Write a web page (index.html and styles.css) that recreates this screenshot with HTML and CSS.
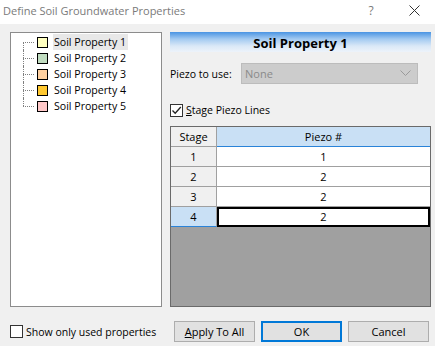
FILE: index.html
```html
<!DOCTYPE html>
<html lang="en">
<head>
    <meta charset="UTF-8">
    <title>Define Soil Groundwater Properties</title>
    <link rel="stylesheet" href="styles.css">
</head>
<body>
    <div class="dialog">
        <!-- Window title bar -->
        <div class="titlebar">
            <span class="title">Define Soil Groundwater Properties</span>
            <span class="help">?</span>
            <span class="close">
                <svg width="11" height="11" viewBox="0 0 11 11"><path d="M0.5 0.5 L10.5 10.5 M10.5 0.5 L0.5 10.5" stroke="#333" stroke-width="1"/></svg>
            </span>
        </div>

        <div class="main">
            <!-- Property tree -->
            <ul class="tree">
                <li class="first"><span class="twig"></span><span class="swatch c1"></span><span class="label selected">Soil Property 1</span></li>
                <li><span class="twig"></span><span class="swatch c2"></span><span class="label">Soil Property 2</span></li>
                <li><span class="twig"></span><span class="swatch c3"></span><span class="label">Soil Property 3</span></li>
                <li><span class="twig"></span><span class="swatch c4"></span><span class="label">Soil Property 4</span></li>
                <li class="last"><span class="twig"></span><span class="swatch c5"></span><span class="label">Soil Property 5</span></li>
            </ul>

            <!-- Right side panel -->
            <div class="panel">
                <div class="panelHead">Soil Property 1</div>

                <div class="field">
                    <span class="fieldLabel">Piezo to use:</span>
                    <div class="select">
                        <span>None</span>
                        <svg width="11" height="7" viewBox="0 0 11 7"><path d="M0.5 0.5 L5.5 5.5 L10.5 0.5" fill="none" stroke="#9a9a9a" stroke-width="1"/></svg>
                    </div>
                </div>

                <div class="check">
                    <span class="box">
                        <svg width="11" height="11" viewBox="0 0 11 11"><path d="M1.5 5.5 L4.2 8.3 L9.8 2" fill="none" stroke="#222" stroke-width="1.3"/></svg>
                    </span>
                    <span><u>S</u>tage Piezo Lines</span>
                </div>

                <!-- Stage / piezo grid -->
                <div class="grid">
                    <div class="row head">
                        <div class="cell stage">Stage</div>
                        <div class="cell piezo current">Piezo #</div>
                    </div>
                    <div class="row">
                        <div class="cell stage">1</div>
                        <div class="cell piezo">1</div>
                    </div>
                    <div class="row">
                        <div class="cell stage">2</div>
                        <div class="cell piezo">2</div>
                    </div>
                    <div class="row">
                        <div class="cell stage">3</div>
                        <div class="cell piezo">2</div>
                    </div>
                    <div class="row">
                        <div class="cell stage current">4</div>
                        <div class="cell piezo active">2</div>
                    </div>
                </div>
            </div>
        </div>

        <!-- Bottom bar -->
        <div class="footer">
            <div class="check">
                <span class="box"></span>
                <span>Show only used properties</span>
            </div>
            <div class="buttons">
                <button class="btn"><u>A</u>pply To All</button>
                <button class="btn default">OK</button>
                <button class="btn">Cancel</button>
            </div>
        </div>
    </div>
</body>
</html>
```

FILE: styles.css
```css
/* General page */
body {
    margin: 0;
    font-family: "Open Sans", "Noto Sans", sans-serif;
    font-size: 10.5px;
    color: #000;
    background-color: #f0f0f0;
}

.dialog {
    width: 435px;
    height: 346px;
    display: flex;
    flex-direction: column;
}

/* Title bar */
.titlebar {
    height: 24px;
    background-color: #fff;
    display: flex;
    align-items: center;
    color: #7a7a7a;
    font-size: 11px;
}

.title {
    flex: 1;
    padding-left: 3px;
    padding-bottom: 4px;
}

.help {
    width: 44px;
    text-align: center;
    padding-bottom: 4px;
    font-size: 12px;
}

.close {
    width: 42px;
    display: flex;
    justify-content: center;
    padding-bottom: 4px;
}

/* Main area */
.main {
    display: flex;
    padding: 8px 4px 0 10px;
}

/* Tree of properties */
.tree {
    list-style: none;
    margin: 0;
    padding: 1px 0 0 0;
    width: 152px;
    height: 275px;
    box-sizing: border-box;
    border: 1px solid #8c8c8c;
    background-color: #fff;
}

.tree li {
    height: 16px;
    display: flex;
    align-items: center;
}

.twig {
    position: relative;
    width: 26px;
    height: 16px;
}

/* Dotted connector lines */
.twig::before {
    content: "";
    position: absolute;
    left: 12px;
    top: 8px;
    width: 11px;
    border-top: 1px dotted #7f7f7f;
}

.twig::after {
    content: "";
    position: absolute;
    left: 12px;
    top: 0;
    height: 16px;
    border-left: 1px dotted #7f7f7f;
}

.first .twig::after {
    top: 8px;
    height: 8px;
}

.last .twig::after {
    height: 8px;
}

.swatch {
    width: 11px;
    height: 11px;
    box-sizing: border-box;
    border: 1px solid #000;
    margin-right: 5px;
}

.c1 { background-color: #ffffc0; }
.c2 { background-color: #c0dcc0; }
.c3 { background-color: #ffd0a0; }
.c4 { background-color: #ffc830; }
.c5 { background-color: #ffc8c8; }

.label {
    padding: 0 2px 0 1px;
    line-height: 16px;
    font-size: 10.6px;
}

.label.selected {
    background-color: #e8e8e8;
}

/* Right panel */
.panel {
    margin-left: 8px;
    flex: 1;
    display: flex;
    flex-direction: column;
}

.panelHead {
    height: 20px;
    background: linear-gradient(#4a94e3, #a3caf1 35%, #dae8f7 70%, #edf3fa);
    text-align: center;
    font-weight: bold;
    font-size: 13px;
    line-height: 22px;
}

.field {
    display: flex;
    align-items: center;
    margin-top: 11px;
    padding-right: 13px;
}

.fieldLabel {
    width: 71px;
}

.select {
    flex: 1;
    height: 21px;
    box-sizing: border-box;
    border: 1px solid #bcbcbc;
    background-color: #cccccc;
    color: #8a8a8a;
    display: flex;
    align-items: center;
    justify-content: space-between;
    padding: 0 6px 0 3px;
    font-size: 11px;
}

/* Checkbox rows */
.check {
    display: flex;
    align-items: center;
    height: 16px;
    white-space: nowrap;
}

.panel .check {
    margin-top: 18px;
}

.box {
    width: 13px;
    height: 13px;
    box-sizing: border-box;
    border: 1px solid #333;
    background-color: #fff;
    margin-right: 3px;
    display: flex;
    align-items: center;
    justify-content: center;
}

/* Grid */
.grid {
    margin-top: 8px;
    height: 181px;
    box-sizing: border-box;
    border: 1px solid #6a6a6a;
    background-color: #a0a0a0;
}

.row {
    display: flex;
    height: 20px;
}

.cell {
    height: 20px;
    box-sizing: border-box;
    border-bottom: 1px solid #a0a0a0;
    text-align: center;
    line-height: 19px;
    font-size: 11px;
}

.stage {
    width: 46px;
    border-right: 1px solid #a0a0a0;
    background-color: #f0f0f0;
}

.piezo {
    flex: 1;
    background-color: #fff;
}

.cell.current {
    background-color: #c9e0f5;
    border-bottom: 1px solid #2a83d8;
}

.cell.active {
    outline: 2px solid #000;
    outline-offset: -2px;
    border-bottom: none;
}

/* Footer */
.footer {
    margin-top: 14px;
    padding: 0 6px 0 10px;
    display: flex;
    align-items: center;
    justify-content: space-between;
}

.buttons {
    display: flex;
    gap: 6px;
}

.btn {
    width: 81px;
    height: 21px;
    box-sizing: border-box;
    border: 1px solid #adadad;
    background-color: #e1e1e1;
    font-family: inherit;
    font-size: 11px;
    color: #000;
    padding: 0;
}

.btn.default {
    border: 2px solid #0078d7;
}
```
